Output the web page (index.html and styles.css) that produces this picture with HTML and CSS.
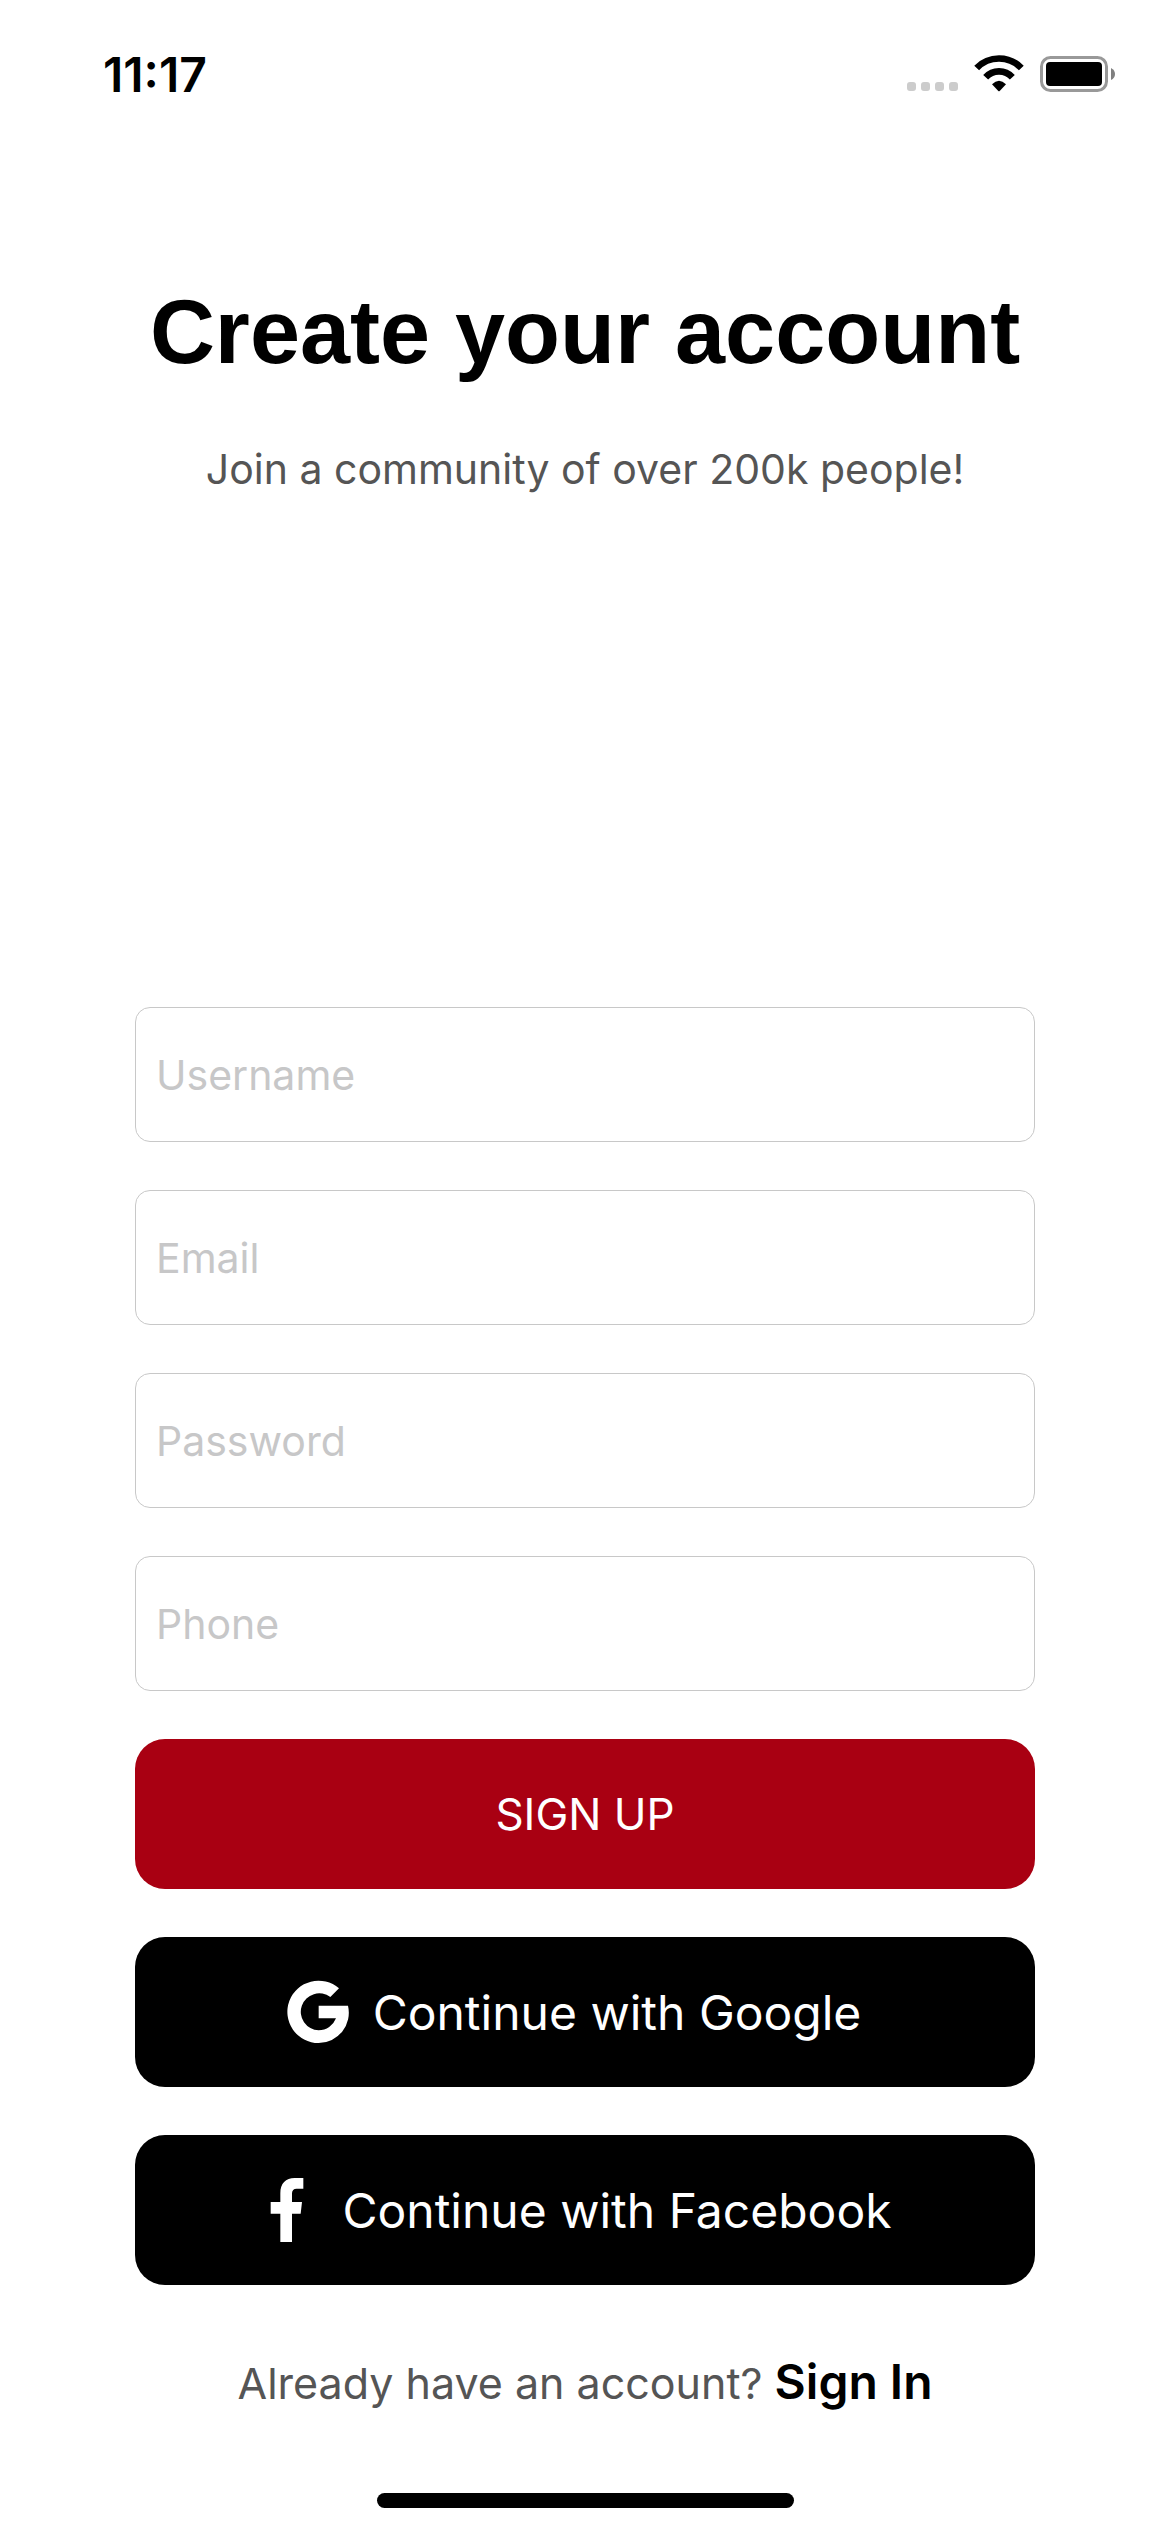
FILE: index.html
```html
<!DOCTYPE html>
<html lang="en">
<head>
  <meta charset="utf-8">
  <meta name="viewport" content="width=device-width, initial-scale=1">
  <title>Create your account</title>
  <link rel="stylesheet" href="styles.css">
</head>
<body>
  <div class="screen">
    <header class="status-bar">
      <time class="status-time">11:17</time>
      <div class="status-icons">
        <div class="signal"><i></i><i></i><i></i><i></i></div>
        <svg class="wifi" viewBox="282 74 150 111" aria-hidden="true">
          <path class="wifi-arc" d="M290 113A93 93 0 0 1 424 113M317 141A54 54 0 0 1 397 141"/>
          <path d="M336 162Q357 141 378 162L359 182Q357 184 355 182Z"/>
        </svg>
        <svg class="battery" viewBox="0 0 76 36" aria-hidden="true">
          <rect class="battery-shell" x="1.5" y="1.5" width="65" height="33" rx="9"/>
          <rect x="6" y="6" width="56" height="24" rx="4"/>
          <path class="battery-tip" d="M71 12Q75 14 75 18T71 24Z"/>
        </svg>
      </div>
    </header>

    <main class="content">
      <div class="intro">
        <h1 class="title">Create your account</h1>
        <p class="subtitle">Join a community of over 200k people!</p>
      </div>

      <form class="form">
        <input class="field" type="text" placeholder="Username" aria-label="Username">
        <input class="field" type="email" placeholder="Email" aria-label="Email">
        <input class="field" type="password" placeholder="Password" aria-label="Password">
        <input class="field" type="tel" placeholder="Phone" aria-label="Phone">
        <button class="button button-primary" type="submit">SIGN UP</button>
        <button class="button button-social" type="button">
          <svg class="social-icon" viewBox="73 91 186 192" aria-hidden="true">
            <path d="M229 116A93.500 93.500 0 1 0 168 280A91 91 0 0 0 256 168H168V206H220A56 56 0 0 1 168 242A55.500 55.500 0 1 1 203 142Z"/>
          </svg>
          Continue with Google
        </button>
        <button class="button button-social" type="button">
          <svg class="social-icon" viewBox="44 114 186 192" aria-hidden="true">
            <path d="M117 306V221H88V186H117V160C117 130 133 114 160 114H186V146H166Q152 146 152 160V186H182L178 221H152V306Z"/>
          </svg>
          Continue with Facebook
        </button>
      </form>

      <p class="signin">Already have an account? <a class="signin-link" href="#signin">Sign In</a></p>
    </main>

    <div class="home-indicator"></div>
  </div>
</body>
</html>
```

FILE: styles.css
```css
* {
  box-sizing: border-box;
}

body {
  margin: 0;
  background: #fff;
  color: #000;
  font-family: Inter, "Liberation Sans", sans-serif;
}

.screen {
  display: flex;
  flex-direction: column;
  min-height: 100vh;
  padding-bottom: 24px;
}

.status-bar {
  display: flex;
  justify-content: space-between;
  padding: 47px 54px 30px 103px;
}

.status-time {
  font-size: 48px;
  font-weight: 600;
  line-height: 55px;
}

.status-icons {
  display: flex;
  align-items: flex-end;
  gap: 16px;
  height: 45px;
}

.signal {
  display: flex;
  gap: 5px;
  padding-bottom: 1px;
}

.signal i {
  width: 9px;
  height: 9px;
  border-radius: 3px;
  background: #ccc;
}

.wifi {
  width: 50px;
  height: 37px;
}

.wifi-arc {
  fill: none;
  stroke: #000;
  stroke-width: 20;
}

.battery {
  width: 76px;
  height: 36px;
}

.battery-shell {
  fill: none;
  stroke: #999;
  stroke-width: 3;
}

.battery-tip {
  fill: #808080;
}

.content {
  display: flex;
  flex: 1;
  flex-direction: column;
  padding: 146px 135px 0;
}

.intro {
  text-align: center;
}

.title {
  margin: 0;
  font-family: "Liberation Sans", Arial, sans-serif;
  font-size: 90px;
  font-weight: 700;
  line-height: 108px;
}

.subtitle {
  margin: 58px 0 0;
  color: #555;
  font-size: 41px;
  line-height: 50px;
}

.form {
  display: flex;
  flex-direction: column;
  gap: 48px;
  margin-top: auto;
}

.field {
  width: 100%;
  height: 135px;
  padding: 0 20px;
  border: 1px solid #c8c8c8;
  border-radius: 15px;
  background: #fff;
  color: #000;
  font: 41px Inter, "Liberation Sans", sans-serif;
}

.field::placeholder {
  color: #c7c7c8;
  opacity: 1;
}

.button {
  display: flex;
  align-items: center;
  justify-content: center;
  height: 150px;
  border: 0;
  border-radius: 30px;
  color: #fff;
  font-family: inherit;
}

.button-primary {
  background: #a90012;
  font-size: 44px;
}

.button-social {
  gap: 24px;
  padding: 0 28px 0 6px;
  background: #000;
  font-size: 48px;
}

.social-icon {
  width: 62px;
  height: 64px;
  fill: #fff;
}

.signin {
  margin: 68px 0 80px;
  color: #555;
  font-size: 43px;
  line-height: 60px;
  text-align: center;
}

.signin-link {
  color: #000;
  font-size: 48px;
  font-weight: 600;
  line-height: 1;
  text-decoration: none;
}

.home-indicator {
  align-self: center;
  width: 417px;
  height: 15px;
  border-radius: 8px;
  background: #000;
}
```
